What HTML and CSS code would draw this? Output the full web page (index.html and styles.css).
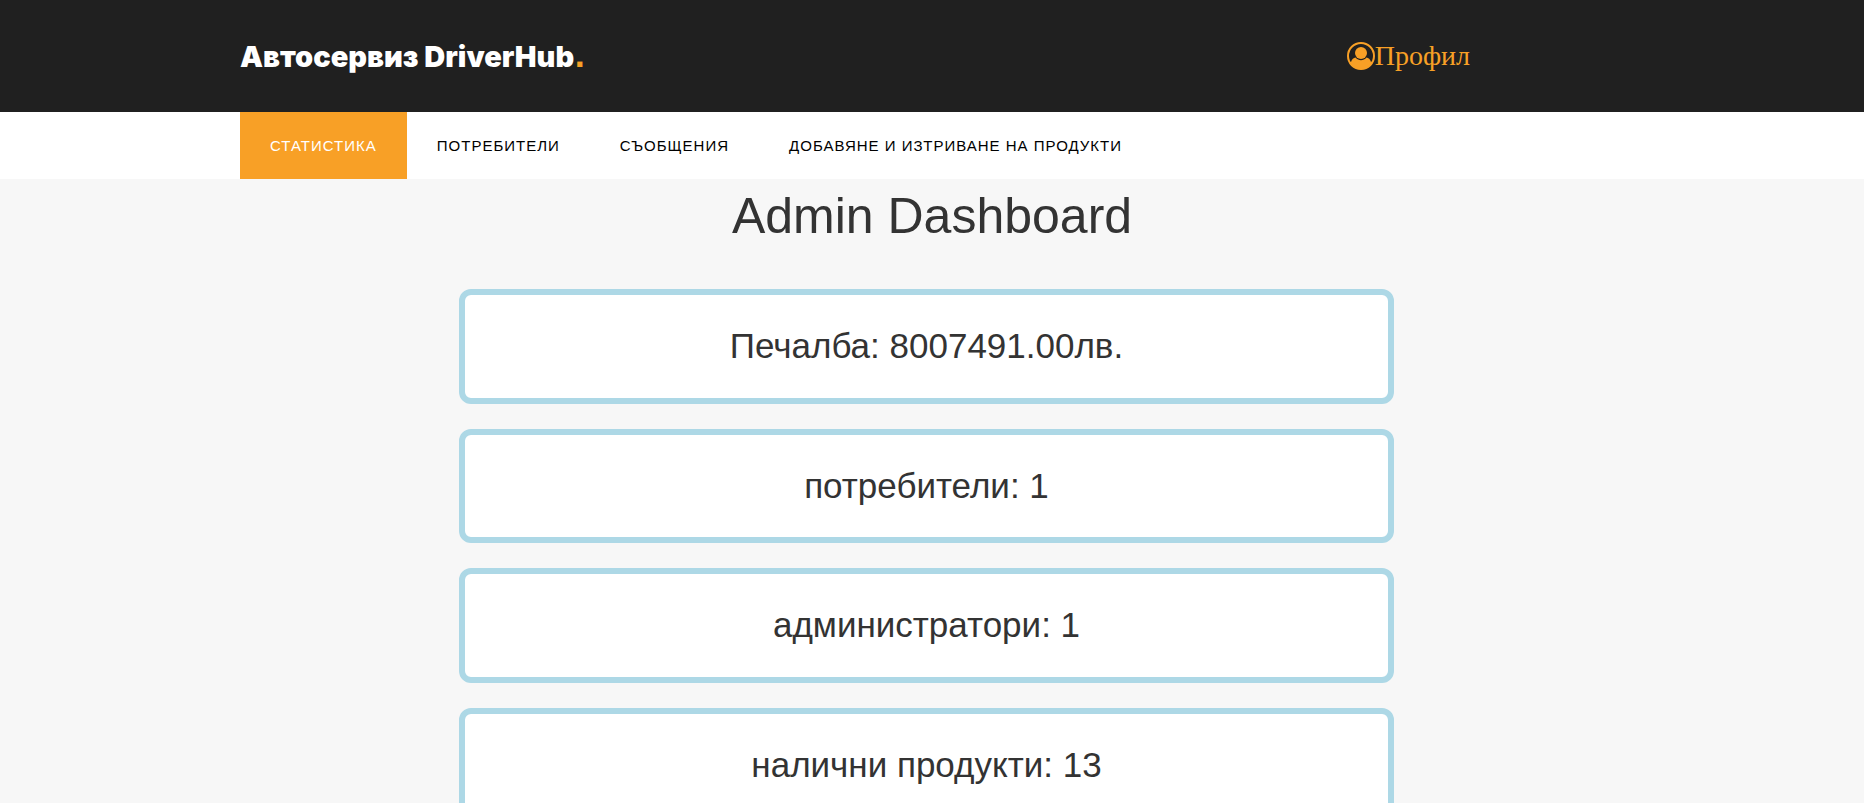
FILE: index.html
```html
<!DOCTYPE html>
<html lang="bg">
<head>
<meta charset="utf-8">
<meta name="viewport" content="width=device-width, initial-scale=1">
<title>Автосервиз DriverHub</title>
<link rel="stylesheet" href="styles.css">
</head>
<body>
<header class="header">
  <div class="container header-inner">
    <a class="logo" href="#">Автосервиз DriverHub<span class="logo-dot">.</span></a>
    <a class="profile" href="#">
      <svg class="profile-icon" viewBox="0 0 28 28" aria-hidden="true">
        <circle cx="14" cy="14" r="13" fill="none" stroke="currentColor" stroke-width="2"/>
        <circle cx="14" cy="11" r="6" fill="currentColor"/>
        <path d="M4 20 C5 17 6.500 16 8.500 15.500 C11.500 19 16.500 19 19.500 15.500 C21.500 16 23 17 24 20 L26 19 A13 13 0 0 1 2 19 Z" fill="currentColor"/>
      </svg>
      <span>Профил</span>
    </a>
  </div>
</header>
<nav class="nav">
  <ul class="container nav-list">
    <li><a class="nav-link active" href="#">Статистика</a></li>
    <li><a class="nav-link" href="#">Потребители</a></li>
    <li><a class="nav-link" href="#">Съобщения</a></li>
    <li><a class="nav-link" href="#">Добавяне и изтриване на продукти</a></li>
  </ul>
</nav>
<main>
  <h1 class="title">Admin Dashboard</h1>
  <section class="stats">
    <h2 class="card">Печалба: 8007491.00лв.</h2>
    <h2 class="card">потребители: 1</h2>
    <h2 class="card">администратори: 1</h2>
    <h2 class="card">налични продукти: 13</h2>
  </section>
</main>
</body>
</html>
```
FILE: styles.css
```css
* { box-sizing: border-box; }
body {
  margin: 0;
  background: #f7f7f7;
  color: #333;
  font-family: "Liberation Sans", Arial, sans-serif;
}
a { text-decoration: none; }
.container {
  width: 100%;
  max-width: 1384px;
  margin: 0 auto;
}
.header { background: #202020; }
.header-inner {
  display: flex;
  align-items: center;
  justify-content: space-between;
  min-height: 112px;
  padding-right: 154px;
}
.logo {
  color: #fff;
  font-family: Inter, sans-serif;
  font-size: 29px;
  font-weight: 900;
}
.logo-dot { color: #f8a026; font-family: "DejaVu Sans", sans-serif; line-height: 1; }
.profile {
  display: flex;
  align-items: center;
  color: #f8a026;
  font-family: "Liberation Serif", "Times New Roman", serif;
  font-size: 28px;
}
.profile-icon { width: 28px; height: 28px; }
.nav { background: #fff; }
.nav-list {
  display: flex;
  flex-wrap: wrap;
  padding: 0;
  list-style: none;
}
.nav-link {
  display: block;
  padding: 0 30px;
  color: #000;
  font-size: 15px;
  line-height: 67px;
  letter-spacing: 1px;
  text-transform: uppercase;
}
.nav-link.active { background: #f8a026; color: #fff; }
.title {
  margin: 10px 0 45px;
  font-size: 50px;
  font-weight: 400;
  line-height: 55px;
  text-align: center;
}
.stats {
  display: flex;
  flex-direction: column;
  align-items: center;
  gap: 25px;
  padding-right: 11px;
}
.card {
  width: 50.5%;
  margin: 0;
  padding: 32px 20px;
  border: 6px solid #add8e6;
  border-radius: 12px;
  background: #fff;
  font-size: 35px;
  font-weight: 400;
  line-height: 1.1;
  text-align: center;
}
```
